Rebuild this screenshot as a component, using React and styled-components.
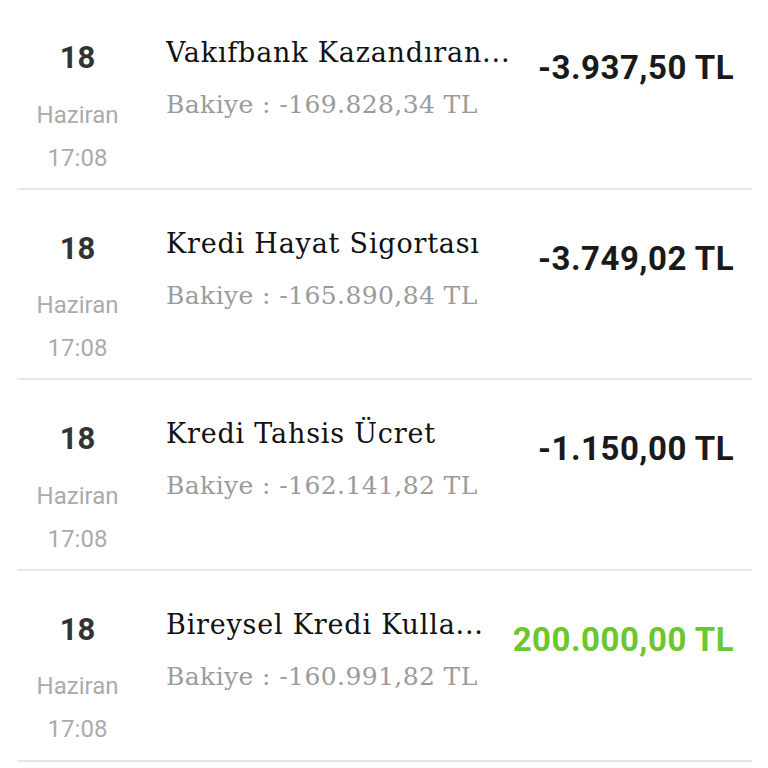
import React from "react";
import styled, { createGlobalStyle } from "styled-components";

const Global = createGlobalStyle`
  html, body { margin: 0; padding: 0; background: #ffffff; }
  body { font-family: Roboto, "Liberation Sans", sans-serif; }
`;

const List = styled.div`
  margin: -1px 16px 0 17px;
`;

const Row = styled.div`
  display: flex;
  align-items: flex-start;
  box-sizing: border-box;
  height: 190.67px;
  padding: 36px 18px 0 0;
  border-bottom: 2px solid #e6e6e6;
`;

const DateCol = styled.div`
  width: 121px;
  flex: none;
  text-align: center;
  font-family: Roboto, sans-serif;
`;

const Day = styled.div`
  margin-top: 5px;
  font-size: 31px;
  line-height: 36px;
  font-weight: 700;
  color: #333333;
`;

const Sub = styled.div`
  font-size: 24px;
  line-height: 43px;
  color: #ababab;
  margin-top: ${(p) => (p.$first ? "17.5px" : "0")};
`;

const Info = styled.div`
  flex: 1;
  min-width: 0;
  margin-left: 28px;
  font-family: "DejaVu Serif", "Liberation Serif", serif;
`;

const Title = styled.div`
  font-size: 27px;
  line-height: 36px;
  letter-spacing: 0.8px;
  color: #111111;
  white-space: nowrap;
  overflow: hidden;
`;

const Balance = styled.div`
  margin-top: 16px;
  font-size: 25px;
  line-height: 36px;
  letter-spacing: 0.4px;
  color: #9b9b9b;
  white-space: nowrap;
`;

const Amount = styled.div`
  flex: none;
  margin-top: 15px;
  margin-left: 28px;
  font-family: Roboto, sans-serif;
  font-size: 33px;
  line-height: 36px;
  letter-spacing: 0.5px;
  font-weight: 700;
  color: ${(p) => (p.$positive ? "#6cc62e" : "#1a1a1a")};
`;

const items = [
  { title: "Vakıfbank Kazandıran...", balance: "-169.828,34 TL", amount: "-3.937,50 TL" },
  { title: "Kredi Hayat Sigortası", balance: "-165.890,84 TL", amount: "-3.749,02 TL" },
  { title: "Kredi Tahsis Ücret", balance: "-162.141,82 TL", amount: "-1.150,00 TL" },
  { title: "Bireysel Kredi Kulla...", balance: "-160.991,82 TL", amount: "200.000,00 TL", positive: true },
];

export default function App() {
  return (
    <>
      <Global />
      <List>
        {items.map((it, i) => (
          <Row key={i}>
            <DateCol>
              <Day>18</Day>
              <Sub $first>Haziran</Sub>
              <Sub>17:08</Sub>
            </DateCol>
            <Info>
              <Title>{it.title}</Title>
              <Balance>Bakiye : {it.balance}</Balance>
            </Info>
            <Amount $positive={it.positive}>{it.amount}</Amount>
          </Row>
        ))}
      </List>
    </>
  );
}
